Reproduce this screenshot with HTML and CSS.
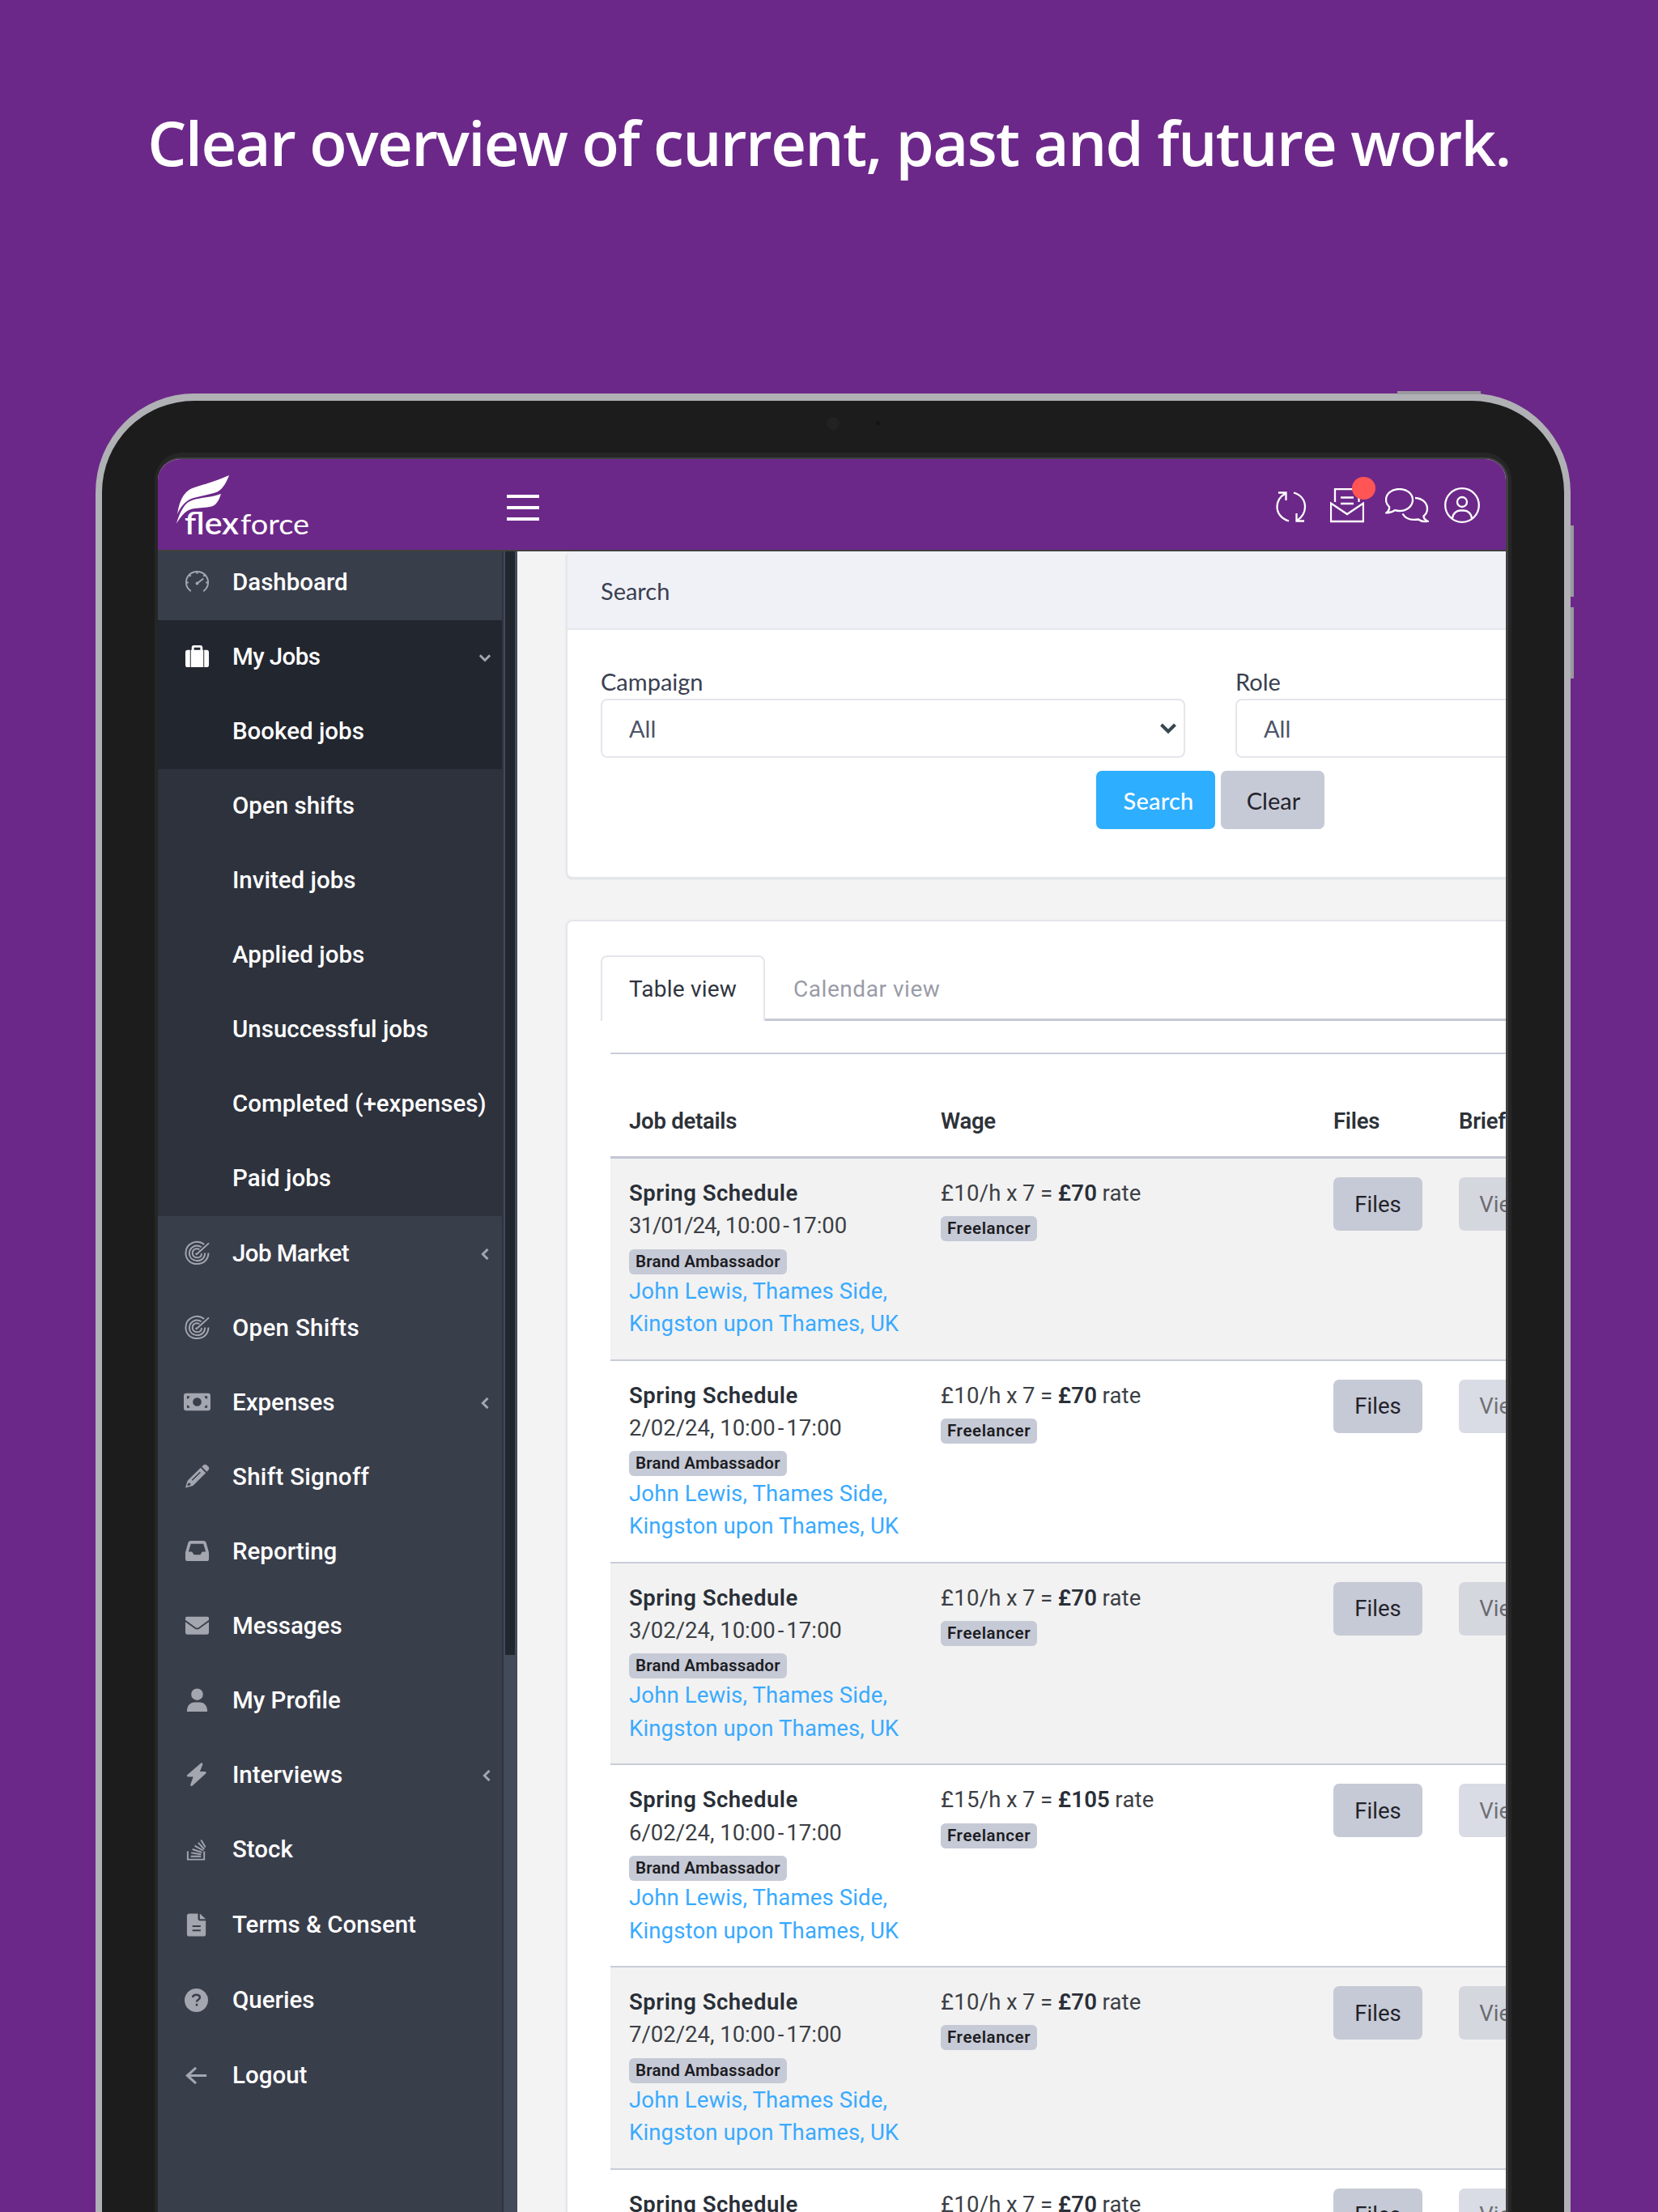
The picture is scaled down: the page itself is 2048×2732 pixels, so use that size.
FILE: index.html
```html
<!DOCTYPE html>
<html lang="en">
<head>
    <meta charset="UTF-8">
    <meta name="viewport" content="width=device-width, initial-scale=1.0">
    <title>Flexforce</title>
    <link rel="stylesheet" href="styles.css">
</head>
<body>
    <div class="stage">
        <h1>Clear overview of current, past and future work.</h1>
        <div class="device">
            <span class="side-button power"></span>
            <span class="side-button volume-up"></span>
            <span class="side-button volume-down"></span>
            <span class="camera"></span>
            <span class="sensor"></span>
            <div class="bezel">
                <div class="screen">
                    <header class="topbar">
                        <svg class="logo" width="166" height="84" viewBox="0 0 166 84">
                            <path fill="#fff" d="M65 0C62 8 58 15 54 18C52 20 49 21 46 22L21 28C12 31 6 37 1 48C3 36 6 27 12 21C18 15 26 14 35 11C46 8 55 4 65 0Z"/>
                            <path fill="#fff" d="M55 23C53 29 51 33 48 36C45 38.500 42 39 38 39.500L22 41C12 42 6 50 0 59.500C3 49 8 38 14 33.500C20 29.500 29 28.500 38 27C45 26 51 24.500 55 23Z"/>
                            <text class="logo-flex" x="10" y="73" textLength="67" lengthAdjust="spacingAndGlyphs">flex</text>
                            <text class="logo-force" x="79" y="73" textLength="85" lengthAdjust="spacingAndGlyphs">force</text>
                        </svg>
                        <div class="menu-toggle"><i></i><i></i><i></i></div>
                        <div class="topbar-icons">
                            <svg class="icon-refresh" width="38" height="39" viewBox="0 0 38 39">
                                <path d="M16 36.500C7 34 1.500 27 1.500 19C1.500 12.500 5 6.500 11 3M3 1.500H12.500V11M22 1.500C30 3.500 36 10 36 19C36 26 32 32 26 36M35 36.500H25.500V27"/>
                            </svg>
                            <div class="mail">
                                <svg width="42" height="43" viewBox="0 0 42 43">
                                    <path d="M6 17V1H35.500V17M13 11.500H29M13 19H29M1 18.500V41H41V18.500L21 32Z"/>
                                </svg>
                                <span class="mail-dot"></span>
                            </div>
                            <svg class="icon-chat" width="54" height="43" viewBox="0 0 54 43">
                                <path d="M17.500 1C27 1 34 7 34 14.500C34 22 27 28 17.500 28C15.500 28 13.500 27.700 12 27.200C9 29.500 5 30.500 1.500 30.300C4.500 28 5.500 25.500 5 23C2.500 20.500 1 17.800 1 14.500C1 7 8 1 17.500 1Z"/>
                                <path d="M37 12C46 12.500 52 18 52 25.500C52 29 50.500 32 47.500 34.500C47.500 37 49 39 52.500 40.800C48 41.500 43.500 40.500 41 38.500C32 40 25 37.500 21.500 31.500"/>
                            </svg>
                            <svg class="icon-user" width="44" height="44" viewBox="0 0 44 44">
                                <circle cx="22" cy="22" r="20.800"/>
                                <circle cx="22" cy="18" r="6"/>
                                <path d="M10 38.500C10.500 32 15 28.500 20 28.500H24C29 28.500 33.500 32 34 38.500"/>
                            </svg>
                        </div>
                    </header>

                    <div class="layout">
                        <aside class="sidebar">
                            <nav class="nav">
                                <a class="nav-item">
                                    <svg class="nav-icon" viewBox="0 0 32 32"><path class="line" d="M8 28C4 25 2 21 2 17C2 9 8 3 16 3C24 3 30 9 30 17C30 21 28 25 24 28M16 18L24 12M16 3V6M6 7L8 9M26 7L24 9M2 17H5M30 17H27"/><circle cx="16" cy="18" r="2"/></svg>
                                    <span>Dashboard</span>
                                </a>
                                <a class="nav-item active">
                                    <svg class="nav-icon" viewBox="0 0 32 32"><path fill-rule="evenodd" d="M8 8V30H24V8H23V5C23 3 22 2 20 2H12C10 2 9 3 9 5V8ZM12 5H20V8H12ZM7 8H4C2 8 1 9 1 11V27C1 29 2 30 4 30H7ZM25 8H28C30 8 31 9 31 11V27C31 29 30 30 28 30H25Z"/></svg>
                                    <span class="tight">My Jobs</span>
                                    <svg class="caret down" viewBox="0 0 16 16"><path d="M1 5L8 12L15 5"/></svg>
                                </a>
                                <a class="nav-item sub active">Booked jobs</a>
                                <a class="nav-item sub">Open shifts</a>
                                <a class="nav-item sub">Invited jobs</a>
                                <a class="nav-item sub">Applied jobs</a>
                                <a class="nav-item sub">Unsuccessful jobs</a>
                                <a class="nav-item sub">Completed (+expenses)</a>
                                <a class="nav-item sub">Paid jobs</a>
                                <a class="nav-item">
                                    <svg class="nav-icon" viewBox="0 0 32 32"><path class="line" d="M25 5C15 -2 1 4 1.500 17C2 25 8 30 16 30C24 30 30 25 30.500 16M21.500 8.500C14 4 6 9 6 17C6.500 22 10 26 16 26C22 26 26 22 26 16M19 11.500C14 9 10 12 10 16.500C10.500 20 13 22 16 22C19 22 21.500 20 21.800 16.500M16 17L31 3.500M14 16.500L16 18.500"/></svg>
                                    <span class="tight">Job Market</span>
                                    <svg class="caret" viewBox="0 0 16 16"><path d="M12 1L5 8L12 15"/></svg>
                                </a>
                                <a class="nav-item">
                                    <svg class="nav-icon" viewBox="0 0 32 32"><path class="line" d="M25 5C15 -2 1 4 1.500 17C2 25 8 30 16 30C24 30 30 25 30.500 16M21.500 8.500C14 4 6 9 6 17C6.500 22 10 26 16 26C22 26 26 22 26 16M19 11.500C14 9 10 12 10 16.500C10.500 20 13 22 16 22C19 22 21.500 20 21.800 16.500M16 17L31 3.500M14 16.500L16 18.500"/></svg>
                                    <span class="loose">Open Shifts</span>
                                </a>
                                <a class="nav-item">
                                    <svg class="nav-icon" viewBox="0 0 32 32"><path fill-rule="evenodd" d="M2 5H30C32 5 33 6 33 8V24C33 26 32 27 30 27H2C0 27 -1 26 -1 24V8C-1 6 0 5 2 5ZM16 10.500A5.500 5.500 0 1 0 16 21.500A5.500 5.500 0 1 0 16 10.500ZM3 8.500V12C5 12 6.500 10.500 6.500 8.500ZM29 8.500H25.500C25.500 10.500 27 12 29 12ZM3 23.500H6.500C6.500 21.500 5 20 3 20ZM29 23.500V20C27 20 25.500 21.500 25.500 23.500Z"/></svg>
                                    <span>Expenses</span>
                                    <svg class="caret" viewBox="0 0 16 16"><path d="M12 1L5 8L12 15"/></svg>
                                </a>
                                <a class="nav-item">
                                    <svg class="nav-icon" viewBox="0 0 32 32"><path fill-rule="evenodd" d="M22 3.500L24 1.500C25.500 0.500 27 0.500 28.500 1.700L30.500 3.700C31.500 5 31.500 6.500 30.300 8L28.300 10ZM20.500 5L27 11.500L12 26.500C11 27.500 10 28 9 28.300L1 30.500L3.300 22.800C3.700 21.500 4 21 5 20ZM10 21.500L20.500 11L19.500 10L9 20.500ZM4.500 24L3.500 28L7.500 27V24.500H4.500Z"/></svg>
                                    <span class="loose">Shift Signoff</span>
                                </a>
                                <a class="nav-item">
                                    <svg class="nav-icon" viewBox="0 0 32 32"><path fill-rule="evenodd" d="M8 3H24C26 3 27 4 27.500 5.500L31 18V26C31 28 30 29 28 29H4C2 29 1 28 1 26V18L4.500 5.500C5 4 6 3 8 3ZM8 7L5 17H9.500L12 21H20L22.500 17H27L24 7Z"/></svg>
                                    <span>Reporting</span>
                                </a>
                                <a class="nav-item">
                                    <svg class="nav-icon" viewBox="0 0 32 32"><path d="M3 5H29C30.500 5 31 6 31 7V9L18 18.500C16.500 19.500 15.500 19.500 14 18.500L1 9V7C1 6 1.500 5 3 5ZM1 11.500L13 20C15 21.500 17 21.500 19 20L31 11.500V25C31 26.500 30 27.500 28.500 27.500H3.500C2 27.500 1 26.500 1 25Z"/></svg>
                                    <span>Messages</span>
                                </a>
                                <a class="nav-item">
                                    <svg class="nav-icon" viewBox="0 0 32 32"><circle cx="16" cy="9" r="7.500"/><path d="M3 31C3 23 7 19 13 19H19C25 19 29 23 29 31Z"/></svg>
                                    <span>My Profile</span>
                                </a>
                                <a class="nav-item">
                                    <svg class="nav-icon" viewBox="0 0 32 32"><path d="M21 1.500C22.500 1 23.500 2 23 3.500L19.500 12.500H26C27.500 12.500 28 14 27 15L10 30.500C8.500 31.500 7 30.500 7.500 29L11 19H4.500C3 19 2.500 17.500 3.500 16.500Z"/></svg>
                                    <span>Interviews</span>
                                    <svg class="caret last" viewBox="0 0 16 16"><path d="M12 1L5 8L12 15"/></svg>
                                </a>
                                <a class="nav-item tall">
                                    <svg class="nav-icon" viewBox="0 0 32 32"><path class="line stack" d="M4 18V28.500H25V18M8 24.500H21M8.500 20L21 22M10 15.500L22 19.500M13 11L23.500 17M17.500 7L25 15.500M21 3.500L26.500 13"/></svg>
                                    <span>Stock</span>
                                </a>
                                <a class="nav-item tall">
                                    <svg class="nav-icon" viewBox="0 0 32 32"><path fill-rule="evenodd" d="M6 1.500H17V8C17 9.500 18 10.500 19.500 10.500H27V27.500C27 29.500 26 30.500 24 30.500H6C4 30.500 3 29.500 3 27.500V4.500C3 2.500 4 1.500 6 1.500ZM19.500 1.500L27 8.500H19.500ZM10 16.500V18.500H20.500V16.500ZM10 22V24H20.500V22Z"/></svg>
                                    <span>Terms &amp; Consent</span>
                                </a>
                                <a class="nav-item tall">
                                    <svg class="nav-icon" viewBox="0 0 32 32"><circle cx="15" cy="16" r="15"/><path class="question" d="M10.500 12.500C10.500 8 19.500 8 19.500 12.500C19.500 15.500 15.500 15 15.500 18M15.500 20.500V23.200"/></svg>
                                    <span>Queries</span>
                                </a>
                                <a class="nav-item tall">
                                    <svg class="nav-icon" viewBox="0 0 32 32"><path class="line arrow" d="M28 16H3.500M14.500 6L3.500 16L14.500 26"/></svg>
                                    <span>Logout</span>
                                </a>
                            </nav>
                            <div class="scrollbar"><div class="thumb"></div></div>
                        </aside>

                        <main class="content">
                            <section class="card search-card">
                                <div class="card-header">Search</div>
                                <div class="card-body">
                                    <div class="fields">
                                        <div class="field">
                                            <label>Campaign</label>
                                            <div class="select">All
                                                <svg width="22" height="16" viewBox="0 0 22 16"><path d="M2.500 3L11 11.500L19.500 3"/></svg>
                                            </div>
                                        </div>
                                        <div class="field">
                                            <label>Role</label>
                                            <div class="select">All</div>
                                        </div>
                                    </div>
                                    <div class="buttons">
                                        <button class="btn btn-primary">Search</button>
                                        <button class="btn">Clear</button>
                                    </div>
                                </div>
                            </section>

                            <section class="card table-card">
                                <div class="tabs">
                                    <div class="tab current">Table view</div>
                                    <div class="tab">Calendar view</div>
                                </div>
                                <div class="table" id="jobs">
                                    <div class="row head">
                                        <div>Job details</div>
                                        <div>Wage</div>
                                        <div>Files</div>
                                        <div>Brief</div>
                                    </div>
                                </div>
                            </section>
                        </main>
                    </div>
                </div>
            </div>
        </div>
    </div>

    <script>
        const jobs = [
            { date: '31/01/24', rate: 10, total: 70 },
            { date: '2/02/24', rate: 10, total: 70 },
            { date: '3/02/24', rate: 10, total: 70 },
            { date: '6/02/24', rate: 15, total: 105 },
            { date: '7/02/24', rate: 10, total: 70 },
            { date: '8/02/24', rate: 10, total: 70 }
        ];
        const table = document.getElementById('jobs');

        jobs.forEach(job => {
            // long dates get slightly tighter digits
            const dateClass = job.date.length > 7 ? 'day long' : 'day';
            const row = document.createElement('div');
            row.className = 'row';
            row.innerHTML = `
                <div>
                    <p class="job-name">Spring Schedule</p>
                    <p><span class="${dateClass}">${job.date},</span> 10:00<span class="dash">-</span>17:00</p>
                    <p><span class="badge">Brand Ambassador</span></p>
                    <p class="place">John Lewis, Thames Side,<br>Kingston upon Thames, UK</p>
                </div>
                <div>
                    <p class="wage">£${job.rate}/h x 7 = <b>£${job.total}</b> rate</p>
                    <p><span class="badge freelancer">Freelancer</span></p>
                </div>
                <div><button class="btn-small">Files</button></div>
                <div><button class="btn-small faded">View</button></div>`;
            table.appendChild(row);
        });
    </script>
</body>
</html>
```
FILE: styles.css
```css
* {
    box-sizing: border-box;
    margin: 0;
    padding: 0;
}

body {
    background-color: #6c2889;
    font-family: Roboto, 'Liberation Sans', sans-serif;
    color: #3c4b64;
}

.stage {
    width: 2048px;
    height: 2732px;
    overflow: hidden;
}

h1 {
    height: 486px;
    padding-top: 122px;
    text-align: center;
    font-family: 'Open Sans', 'Noto Sans', sans-serif;
    font-size: 76px;
    font-weight: 600;
    line-height: 108px;
    letter-spacing: -1.64px;
    white-space: nowrap;
    color: #fff;
}

/* tablet */
.device {
    position: relative;
    width: 1822px;
    height: 2500px;
    margin-left: 118px;
    padding: 64px 65px 0;
    border: 8px solid #b0b1b5;
    border-top-width: 9px;
    border-radius: 122px;
    background-color: #1c1c1c;
}

.side-button {
    position: absolute;
    background-color: #99999e;
}

.power {
    left: 1600px;
    top: -12px;
    width: 103px;
    height: 4px;
}

.volume-up,
.volume-down {
    right: -12px;
    width: 4px;
    height: 88px;
}

.volume-up {
    top: 154px;
}

.volume-down {
    top: 255px;
}

.camera,
.sensor {
    position: absolute;
    border-radius: 50%;
}

.camera {
    left: 895px;
    top: 20px;
    width: 16px;
    height: 16px;
    background-color: #222;
}

.sensor {
    left: 956px;
    top: 25px;
    width: 5px;
    height: 5px;
    background-color: #141414;
}

.bezel {
    height: 2300px;
    padding: 6px 4px 0;
    border-radius: 34px;
    background-color: #262626;
}

.screen {
    height: 2290px;
    border-top: 2px solid #404040;
    border-right: 3px solid #404040;
    border-radius: 28px;
    overflow: hidden;
    background-color: #f3f3f3;
}

/* top bar */
.topbar {
    display: flex;
    align-items: center;
    height: 114px;
    padding: 0 32px 0 23px;
    border-bottom: 2px solid #404040;
    background-color: #6c2889;
}

.logo {
    margin-top: 12px;
}

.logo text {
    font-family: Lato, sans-serif;
    fill: #fff;
}

.logo .logo-flex {
    font-size: 38px;
    font-weight: 600;
}

.logo .logo-force {
    font-size: 35px;
    font-weight: 400;
}

.menu-toggle {
    display: flex;
    flex-direction: column;
    gap: 10px;
    width: 40px;
    margin: 8px 0 0 242px;
}

.menu-toggle i {
    height: 4px;
    background-color: #fff;
}

.topbar-icons {
    display: flex;
    align-items: center;
    margin: 2px 0 0 auto;
}

.topbar-icons svg {
    display: block;
    fill: none;
    stroke: #fff;
    stroke-width: 2.3;
}

.icon-refresh {
    margin: 5px 29px 0 0;
}

.mail {
    position: relative;
    margin-right: 26px;
}

.mail-dot {
    position: absolute;
    left: 27px;
    top: -14px;
    width: 29px;
    height: 28px;
    border-radius: 50%;
    background-color: #ff5555;
}

.icon-chat {
    margin-right: 19px;
}

.layout {
    display: flex;
    height: 2174px;
}

/* sidebar */
.sidebar {
    display: flex;
    flex: none;
    width: 444px;
    overflow: hidden;
    background-color: #393e4b;
}

.nav {
    width: 425px;
    margin-top: -7px;
}

.nav-item {
    display: flex;
    align-items: center;
    height: 92px;
    padding: 0 14px 1px 33px;
    font-size: 29.5px;
    font-weight: 500;
    white-space: nowrap;
    color: #fff;
}

.nav-item:nth-child(-n+9) {
    padding-bottom: 3px;
}

.nav-item.sub {
    padding-left: 92px;
    background-color: #2e323d;
}

.nav-item.active {
    background-color: #22262f;
}

.nav-item.tall {
    height: 93px;
}

.tight {
    letter-spacing: -0.6px;
}

.loose {
    letter-spacing: 0.3px;
}

.nav-icon {
    width: 31px;
    height: 31px;
    margin-right: 28px;
    overflow: visible;
    fill: #a3a6af;
}

.active .nav-icon {
    fill: #fff;
}

.nav-icon .line {
    fill: none;
    stroke: #a3a6af;
    stroke-width: 2;
}

.nav-icon .arrow {
    stroke-width: 3.2;
}

.nav-icon .question {
    fill: none;
    stroke: #393e4b;
    stroke-width: 2.6;
}

.caret {
    width: 14px;
    height: 14px;
    margin: 3px 0 0 auto;
    fill: none;
    stroke: #a3a6af;
    stroke-width: 3.4;
}

.caret.last {
    margin-right: -2px;
}

.scrollbar {
    width: 19px;
    padding: 0 3px 0 2px;
    border-left: 2px solid #2f3340;
    background-color: #434a5a;
}

.thumb {
    height: 1363px;
    background-color: #22262f;
}

/* content */
.content {
    flex: none;
    width: 1400px;
    padding-left: 60px;
}

.card {
    width: 1500px;
    border: 2px solid #e4e6ec;
    border-radius: 8px;
    background-color: #fff;
    box-shadow: 0 1px 2px rgba(60, 75, 100, 0.12);
}

.search-card {
    height: 404px;
    border-top: 0;
    margin-bottom: 51px;
    font-family: Lato, sans-serif;
    font-size: 29px;
    color: #3a3f50;
}

.card-header {
    height: 97px;
    padding: 31px 41px 0;
    border-bottom: 2px solid #e4e6ec;
    border-radius: 8px 8px 0 0;
    background-color: #f0f1f7;
    line-height: 36px;
}

.card-body {
    padding: 46px 41px 0;
}

.fields {
    display: flex;
    gap: 62px;
}

.field {
    flex: none;
    width: 722px;
}

.field label {
    display: block;
    height: 39px;
    line-height: 36px;
}

.select {
    display: flex;
    align-items: center;
    justify-content: space-between;
    height: 73px;
    padding: 0 8px 0 33px;
    border: 2px solid #e4e6ec;
    border-radius: 8px;
    color: #4d5468;
}

.select svg {
    fill: none;
    stroke: #37474f;
    stroke-width: 4;
}

.buttons {
    display: flex;
    gap: 7px;
    margin: 16px 0 0 612px;
}

.btn {
    width: 128px;
    height: 72px;
    padding-left: 2px;
    border: 0;
    border-radius: 7px;
    background-color: #c6cad6;
    font-family: Lato, sans-serif;
    font-size: 29px;
    color: #23232b;
}

.btn-primary {
    width: 147px;
    padding-left: 7px;
    background-color: #2eaeff;
    font-weight: 500;
    letter-spacing: 0.2px;
    color: #fff;
}

.table-card {
    height: 1700px;
    padding: 42px 0 0 41px;
}

.tabs {
    display: flex;
    height: 81px;
    border-bottom: 3px solid #c5c9d6;
}

.tab {
    height: 81px;
    padding: 0 35px;
    font-size: 28px;
    line-height: 84px;
    letter-spacing: 0.55px;
    color: #9a9ca8;
}

.tab.current {
    width: 203px;
    padding: 0 33px;
    border: 2px solid #e4e6ec;
    border-bottom: 0;
    border-radius: 8px 8px 0 0;
    background-color: #fff;
    line-height: 80px;
    letter-spacing: 0.2px;
    color: #2f3540;
}

.table {
    margin: 39px 0 0 12px;
    border-top: 2px solid #c9cdd8;
}

.row {
    display: grid;
    grid-template-columns: 385px 485px 155px 300px;
    height: 249.8px;
    padding: 23px 0 0 23px;
    border-bottom: 2px solid #c9cdd8;
    font-size: 27.5px;
    line-height: 40.3px;
    white-space: nowrap;
    color: #3c3f45;
}

.row:nth-child(even) {
    background-color: #f2f2f2;
}

.row.head {
    height: 129px;
    padding-top: 63px;
    border-bottom: 3px solid #c3c7d4;
    font-weight: 600;
    letter-spacing: -0.25px;
    color: #2d3238;
}

.row p {
    min-height: 40.3px;
}

.job-name,
.wage b {
    font-weight: 600;
    color: #2a2f38;
}

.job-name {
    letter-spacing: 0.5px;
}

.wage {
    letter-spacing: 0.25px;
    word-spacing: -0.8px;
}

.day.long {
    letter-spacing: -1px;
}

.dash {
    margin: 0 3px;
}

.place {
    letter-spacing: 0.15px;
    color: #39aaff;
}

.badge {
    display: block;
    width: fit-content;
    height: 31px;
    margin-top: 8px;
    padding: 0 8px;
    border-radius: 6px;
    background-color: #c6cad6;
    font-size: 20.5px;
    font-weight: 600;
    line-height: 30px;
    letter-spacing: 0.2px;
    color: #1c1c22;
}

.badge.freelancer {
    letter-spacing: 0.6px;
}

.row p:has(.badge) {
    display: flow-root;
    height: 40.3px;
}

.btn-small {
    display: block;
    width: 110px;
    height: 66px;
    border: 0;
    border-radius: 7px;
    background-color: #c6cad6;
    font-family: inherit;
    font-size: 27.5px;
    color: #23232b;
}

.faded {
    opacity: 0.65;
}
```
